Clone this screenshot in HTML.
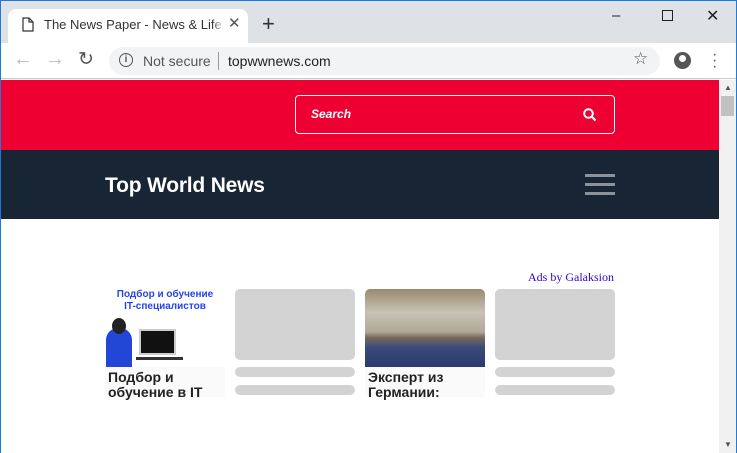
<!DOCTYPE html><html><head><style>
body{margin:0;width:737px;height:453px;overflow:hidden;font-family:"Liberation Sans",sans-serif;position:relative;background:#fff}
div{position:absolute;box-sizing:border-box}
.g{background:#d3d3d3;border-radius:5px}
</style></head><body>
<div style="left:0;top:0;width:737px;height:453px;border:1px solid #1c7bd6;border-bottom:none;z-index:9;pointer-events:none"></div>
<div style="left:0;top:0;width:737px;height:43px;background:#dee1e6"></div>
<div style="left:8px;top:9px;width:240px;height:34px;background:#fff;border-radius:8px 8px 0 0"></div>
<svg style="position:absolute;left:22px;top:17px" width="12" height="15"><path d="M1 1h6l4 4v9H1z M7 1v4h4" fill="none" stroke="#333" stroke-width="1.2"/></svg>
<div style="left:44px;top:17px;font-size:13px;color:#333;width:178px;overflow:hidden;white-space:nowrap">The News Paper - News &amp; Lifestyle</div>
<div style="left:212px;top:17px;width:12px;height:16px;background:linear-gradient(90deg,rgba(255,255,255,0),#fff)"></div>
<div style="left:228px;top:14px;font-size:15px;color:#555">✕</div>
<div style="left:262px;top:11px;font-size:22px;color:#333">+</div>
<div style="left:612px;top:7px;font-size:15px;color:#222">–</div>
<div style="left:662px;top:10px;width:11px;height:11px;border:1.3px solid #222"></div>
<div style="left:706px;top:6px;font-size:16px;color:#222">✕</div>
<div style="left:0;top:43px;width:737px;height:36px;background:#fff;border-bottom:1px solid #ccc"></div>
<div style="left:13px;top:48px;font-size:20px;color:#bbb">←</div>
<div style="left:45px;top:48px;font-size:20px;color:#bbb">→</div>
<div style="left:78px;top:48px;font-size:19px;color:#555">↻</div>
<div style="left:109px;top:47px;width:551px;height:28px;background:#f1f3f4;border-radius:14px"></div>
<div style="left:119px;top:53px;width:14px;height:14px;border:1.5px solid #555;border-radius:50%;font-size:10px;text-align:center;line-height:11px;color:#555;font-weight:bold">i</div>
<div style="left:143px;top:53px;font-size:14px;color:#555">Not secure</div>
<div style="left:218px;top:52px;width:1px;height:18px;background:#999"></div>
<div style="left:228px;top:53px;font-size:14px;color:#222">topwwnews.com</div>
<div style="left:633px;top:49px;font-size:17px;color:#555">☆</div>
<div style="left:674px;top:52px;width:17px;height:17px;border-radius:50%;background:#555"></div>
<div style="left:679px;top:55px;width:7px;height:7px;border-radius:50%;background:#fff"></div>
<div style="left:712px;top:52px;font-size:16px;color:#555;line-height:6px;width:4px">·<br>·<br>·</div>
<div style="left:0;top:80px;width:719px;height:70px;background:#ee0033"></div>
<div style="left:295px;top:95px;width:320px;height:39px;border:1px solid #fff;border-radius:4px"></div>
<div style="left:311px;top:107px;font-size:12px;color:#fff;font-style:italic;font-weight:bold">Search</div>
<svg style="position:absolute;left:583px;top:108px" width="14" height="14"><circle cx="5.5" cy="5.5" r="4.3" fill="none" stroke="#fff" stroke-width="2"/><path d="M8.5 8.5l4 4" stroke="#fff" stroke-width="2.2"/></svg>
<div style="left:0;top:150px;width:719px;height:69px;background:#172535"></div>
<div style="left:105px;top:174px;font-size:21px;font-weight:bold;color:#fff;letter-spacing:-0.2px">Top World News</div>
<div style="left:585px;top:174px;width:30px;height:3px;background:#8b929a"></div>
<div style="left:585px;top:183px;width:30px;height:3px;background:#8b929a"></div>
<div style="left:585px;top:192px;width:30px;height:3px;background:#8b929a"></div>
<div style="left:719px;top:80px;width:18px;height:373px;background:#f1f1f1"></div>
<div style="left:721px;top:96px;width:13px;height:20px;background:#c1c1c1"></div>
<div style="left:724px;top:83px;font-size:8px;color:#555">▲</div>
<div style="left:724px;top:440px;font-size:8px;color:#555">▼</div>
<div style="left:528px;top:270px;font-size:12px;color:#3300cc;font-family:'Liberation Serif',serif">Ads by Galaksion</div>
<div style="left:105px;top:289px;width:120px;text-align:center;font-size:10px;font-weight:bold;color:#2444e8;line-height:12px">Подбор и обучение<br>IT-специалистов</div>
<div style="left:106px;top:328px;width:26px;height:40px;background:#2246d6;border-radius:12px 12px 0 0"></div>
<div style="left:112px;top:318px;width:14px;height:16px;background:#222;border-radius:50%"></div>
<div style="left:139px;top:329px;width:37px;height:26px;background:#111;border:2px solid #ccc"></div>
<div style="left:136px;top:357px;width:47px;height:3px;background:#333"></div>
<div style="left:105px;top:367px;width:120px;height:30px;background:#fafafa"></div>
<div style="left:108px;top:370px;font-size:14px;font-weight:bold;color:#222;line-height:15px">Подбор и<br>обучение в IT</div>
<div class="g" style="left:235px;top:289px;width:120px;height:71px"></div>
<div class="g" style="left:235px;top:367px;width:120px;height:10px"></div>
<div class="g" style="left:235px;top:385px;width:120px;height:10px"></div>
<div style="left:365px;top:289px;width:120px;height:78px;border-radius:5px 5px 0 0;background:linear-gradient(180deg,#9a8a70 0%,#c8c2b4 30%,#b0a898 55%,#7a6a5a 62%,#3a4a7a 75%,#2a3a6a 100%)"></div>
<div style="left:365px;top:367px;width:120px;height:30px;background:#fafafa"></div>
<div style="left:368px;top:370px;font-size:14px;font-weight:bold;color:#222;line-height:15px">Эксперт из<br>Германии:</div>
<div class="g" style="left:495px;top:289px;width:120px;height:71px"></div>
<div class="g" style="left:495px;top:367px;width:120px;height:10px"></div>
<div class="g" style="left:495px;top:385px;width:120px;height:10px"></div>
</body></html>
